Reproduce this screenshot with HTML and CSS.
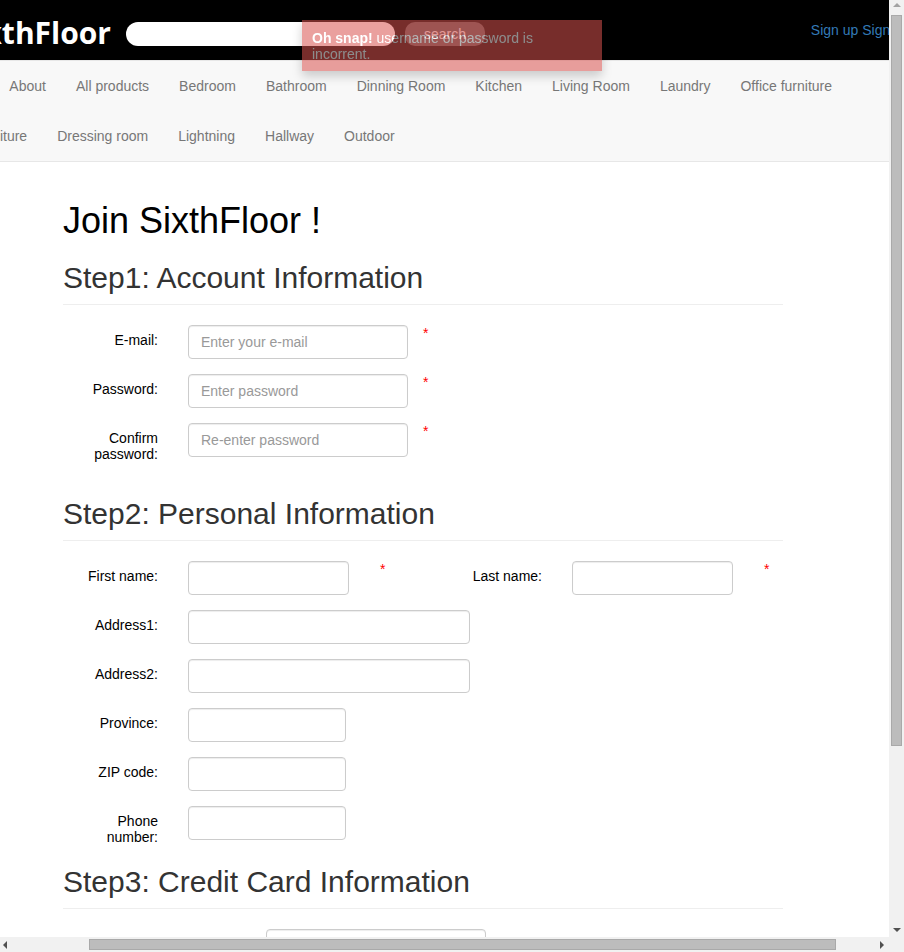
FILE: index.html
```html
<!DOCTYPE html>
<html lang="en">
<head>
<meta charset="utf-8">
<title>Join SixthFloor</title>
<link rel="stylesheet" href="styles.css">
</head>
<body>
<header class="topbar">
  <a class="brand" href="#">SixthFloor</a>
  <input class="search-input" type="text" aria-label="search">
  <button class="search-btn" type="button">search</button>
  <div class="account-links"><a href="#">Sign up</a> <a href="#">Sign in</a></div>
</header>

<nav class="menu">
  <ul class="menu-list">
    <li><a href="#">Home</a></li>
    <li><a href="#">About</a></li>
    <li><a href="#">All products</a></li>
    <li><a href="#">Bedroom</a></li>
    <li><a href="#">Bathroom</a></li>
    <li><a href="#">Dinning Room</a></li>
    <li><a href="#">Kitchen</a></li>
    <li><a href="#">Living Room</a></li>
    <li><a href="#">Laundry</a></li>
    <li><a href="#">Office furniture</a></li>
    <li><a href="#">Kids' furniture</a></li>
    <li><a href="#">Dressing room</a></li>
    <li><a href="#">Lightning</a></li>
    <li><a href="#">Hallway</a></li>
    <li><a href="#">Outdoor</a></li>
  </ul>
</nav>

<div class="alert"><strong>Oh snap!</strong> username or password is incorrent.</div>

<main class="container">
  <h1 class="page-title">Join SixthFloor !</h1>

  <h2 class="section-title">Step1: Account Information</h2>
  <div class="form-row">
    <label class="field-label">E-mail:</label>
    <input class="field w-220" type="text" placeholder="Enter your e-mail">
    <span class="req">*</span>
  </div>
  <div class="form-row">
    <label class="field-label">Password:</label>
    <input class="field w-220" type="password" placeholder="Enter password">
    <span class="req">*</span>
  </div>
  <div class="form-row">
    <label class="field-label">Confirm<br>password:</label>
    <input class="field w-220" type="password" placeholder="Re-enter password">
    <span class="req">*</span>
  </div>

  <h2 class="section-title section-title-spaced">Step2: Personal Information</h2>
  <div class="form-row">
    <div class="half">
      <label class="field-label">First name:</label>
      <input class="field w-161" type="text">
      <span class="req req-wide">*</span>
    </div>
    <div class="half">
      <label class="field-label">Last name:</label>
      <input class="field w-161" type="text">
      <span class="req req-wide">*</span>
    </div>
  </div>
  <div class="form-row">
    <label class="field-label">Address1:</label>
    <input class="field w-282" type="text">
  </div>
  <div class="form-row">
    <label class="field-label">Address2:</label>
    <input class="field w-282" type="text">
  </div>
  <div class="form-row">
    <label class="field-label">Province:</label>
    <input class="field w-158" type="text">
  </div>
  <div class="form-row">
    <label class="field-label">ZIP code:</label>
    <input class="field w-158" type="text">
  </div>
  <div class="form-row">
    <label class="field-label">Phone<br>number:</label>
    <input class="field w-158" type="text">
  </div>

  <h2 class="section-title">Step3: Credit Card Information</h2>
  <div class="form-row">
    <label class="field-label label-wide">Name on card:</label>
    <input class="field w-220" type="text">
  </div>
  <div class="form-row">
    <label class="field-label label-wide">Card number:</label>
    <input class="field w-220" type="text">
  </div>
  <div class="form-row">
    <label class="field-label label-wide">Expiry date:</label>
    <input class="field w-158" type="text">
  </div>
  <div class="form-actions">
    <button class="submit-btn" type="button">Sign up</button>
  </div>
</main>

<div class="scrollbar scrollbar-v" aria-hidden="true">
  <span class="sb-arrow sb-up"></span>
  <span class="sb-thumb-v"></span>
  <span class="sb-arrow sb-down"></span>
</div>
<div class="scrollbar scrollbar-h" aria-hidden="true">
  <span class="sb-arrow sb-left"></span>
  <span class="sb-thumb-h"></span>
  <span class="sb-arrow sb-right"></span>
</div>
<div class="scrollbar-corner" aria-hidden="true"></div>

<script src="script.js"></script>
</body>
</html>
```

FILE: styles.css
```css
html, body {
  margin: 0;
  padding: 0;
}

body {
  min-width: 1022px;
  font-family: "Liberation Sans", Arial, sans-serif;
  font-size: 14px;
  color: #333;
  background: #fff;
}

a {
  text-decoration: none;
}

/* ---------- top black bar ---------- */
.topbar {
  display: flex;
  align-items: flex-start;
  height: 60px;
  background: #000;
}

.brand {
  display: block;
  width: 199px;
  margin-top: 6px;
  margin-right: 15px;
  text-align: right;
  font-family: "Open Sans", "Liberation Sans", sans-serif;
  font-weight: 700;
  font-size: 30px;
  line-height: 54px;
  color: #fff;
  white-space: nowrap;
}

.search-input {
  box-sizing: border-box;
  width: 269px;
  height: 24px;
  margin: 22px 0 0;
  padding: 0 10px;
  border: none;
  border-radius: 12px;
  background: #fff;
  font: 14px "Liberation Sans", Arial, sans-serif;
}

.search-btn {
  box-sizing: border-box;
  width: 80px;
  height: 24px;
  margin: 22px 0 0 10px;
  padding: 0;
  border: none;
  border-radius: 10px;
  background: #585858;
  color: #eee;
  font: 14px/24px "Liberation Sans", Arial, sans-serif;
}

.account-links {
  margin-left: auto;
  padding-right: 29px;
  line-height: 60px;
  white-space: nowrap;
}

.account-links a {
  color: #337ab7;
}

/* ---------- category menu ---------- */
.menu {
  background: #f8f8f8;
  border-top: 1px solid #e7e7e7;
  border-bottom: 1px solid #e7e7e7;
}

.menu-list {
  display: flex;
  flex-wrap: wrap;
  margin: 0;
  padding: 0 15px;
  list-style: none;
}

.menu-list a {
  display: block;
  padding: 15px;
  line-height: 20px;
  color: #777;
  white-space: nowrap;
}

/* ---------- alert ---------- */
.alert {
  position: fixed;
  top: 20px;
  left: 302px;
  z-index: 10;
  box-sizing: border-box;
  width: 300px;
  padding: 10px 10px 9px;
  background: #d9534f;
  color: #fff;
  opacity: 0.55;
  line-height: 16px;
  box-shadow: 0 5px 10px rgba(0, 0, 0, 0.35);
}

/* ---------- main form ---------- */
.container {
  width: 720px;
  margin: 0 auto;
  padding: 0 15px 4px;
}

.page-title {
  margin: 39px 0 0;
  font-size: 36px;
  line-height: 40px;
  font-weight: 400;
  color: #000;
}

.section-title {
  margin: 20px 0 20px;
  padding-bottom: 10px;
  border-bottom: 1px solid #eee;
  font-size: 30px;
  line-height: 33px;
  font-weight: 400;
  color: #333;
}

.section-title-spaced {
  margin-top: 35px;
}

.form-row {
  display: flex;
  align-items: flex-start;
  margin-bottom: 15px;
}

.half {
  display: flex;
  align-items: flex-start;
  flex: 0 0 384px;
}

.field-label {
  flex: 0 0 95px;
  margin-right: 30px;
  padding-top: 7px;
  text-align: right;
  color: #000;
  line-height: 16px;
}

.label-wide {
  flex-basis: 173px;
}

.field {
  box-sizing: border-box;
  height: 34px;
  padding: 6px 12px;
  border: 1px solid #ccc;
  border-radius: 4px;
  background: #fff;
  box-shadow: inset 0 1px 1px rgba(0, 0, 0, 0.075);
  font: 14px "Liberation Sans", Arial, sans-serif;
  color: #555;
}

.field::placeholder {
  color: #999;
}

.w-220 { width: 220px; }
.w-161 { width: 161px; }
.w-282 { width: 282px; }
.w-158 { width: 158px; }

.req {
  margin-left: 15px;
  color: #f00;
  line-height: 16px;
}

.req-wide {
  margin-left: 31px;
}

.form-actions {
  padding-left: 203px;
}

.submit-btn {
  height: 34px;
  padding: 6px 12px;
  border: 1px solid #2e6da4;
  border-radius: 4px;
  background: #337ab7;
  color: #fff;
  font: 14px "Liberation Sans", Arial, sans-serif;
}

/* ---------- window scrollbars (drawn over the page) ---------- */
.scrollbar {
  position: fixed;
  z-index: 20;
  background: #f1f1f1;
}

.scrollbar-v {
  top: 0;
  right: 0;
  width: 15px;
  height: 937px;
}

.scrollbar-h {
  left: 0;
  bottom: 0;
  width: 889px;
  height: 15px;
}

.scrollbar-corner {
  position: fixed;
  z-index: 20;
  right: 0;
  bottom: 0;
  width: 15px;
  height: 15px;
  background: #f1f1f1;
}

.sb-thumb-v {
  position: absolute;
  left: 2px;
  top: 15px;
  box-sizing: border-box;
  width: 11px;
  height: 731px;
  background: #bcbcbc;
  border: 1px solid #a9a9a9;
}

.sb-thumb-h {
  position: absolute;
  left: 89px;
  top: 2px;
  box-sizing: border-box;
  width: 747px;
  height: 11px;
  background: #bcbcbc;
  border: 1px solid #a9a9a9;
}

.sb-arrow {
  position: absolute;
  width: 0;
  height: 0;
  border: 4px solid transparent;
}

.sb-up {
  left: 4px;
  top: 3px;
  border-top-width: 0;
  border-bottom: 4px solid #a3a3a3;
}

.sb-down {
  left: 4px;
  bottom: 5px;
  border-bottom-width: 0;
  border-top: 4px solid #505050;
}

.sb-left {
  left: 3px;
  top: 4px;
  border-left-width: 0;
  border-right: 4px solid #505050;
}

.sb-right {
  right: 5px;
  top: 4px;
  border-right-width: 0;
  border-left: 4px solid #505050;
}
```

FILE: script.js
```js
window.scrollTo(88, 0);
window.addEventListener('load', function () {
  window.scrollTo(88, 0);
});
```
